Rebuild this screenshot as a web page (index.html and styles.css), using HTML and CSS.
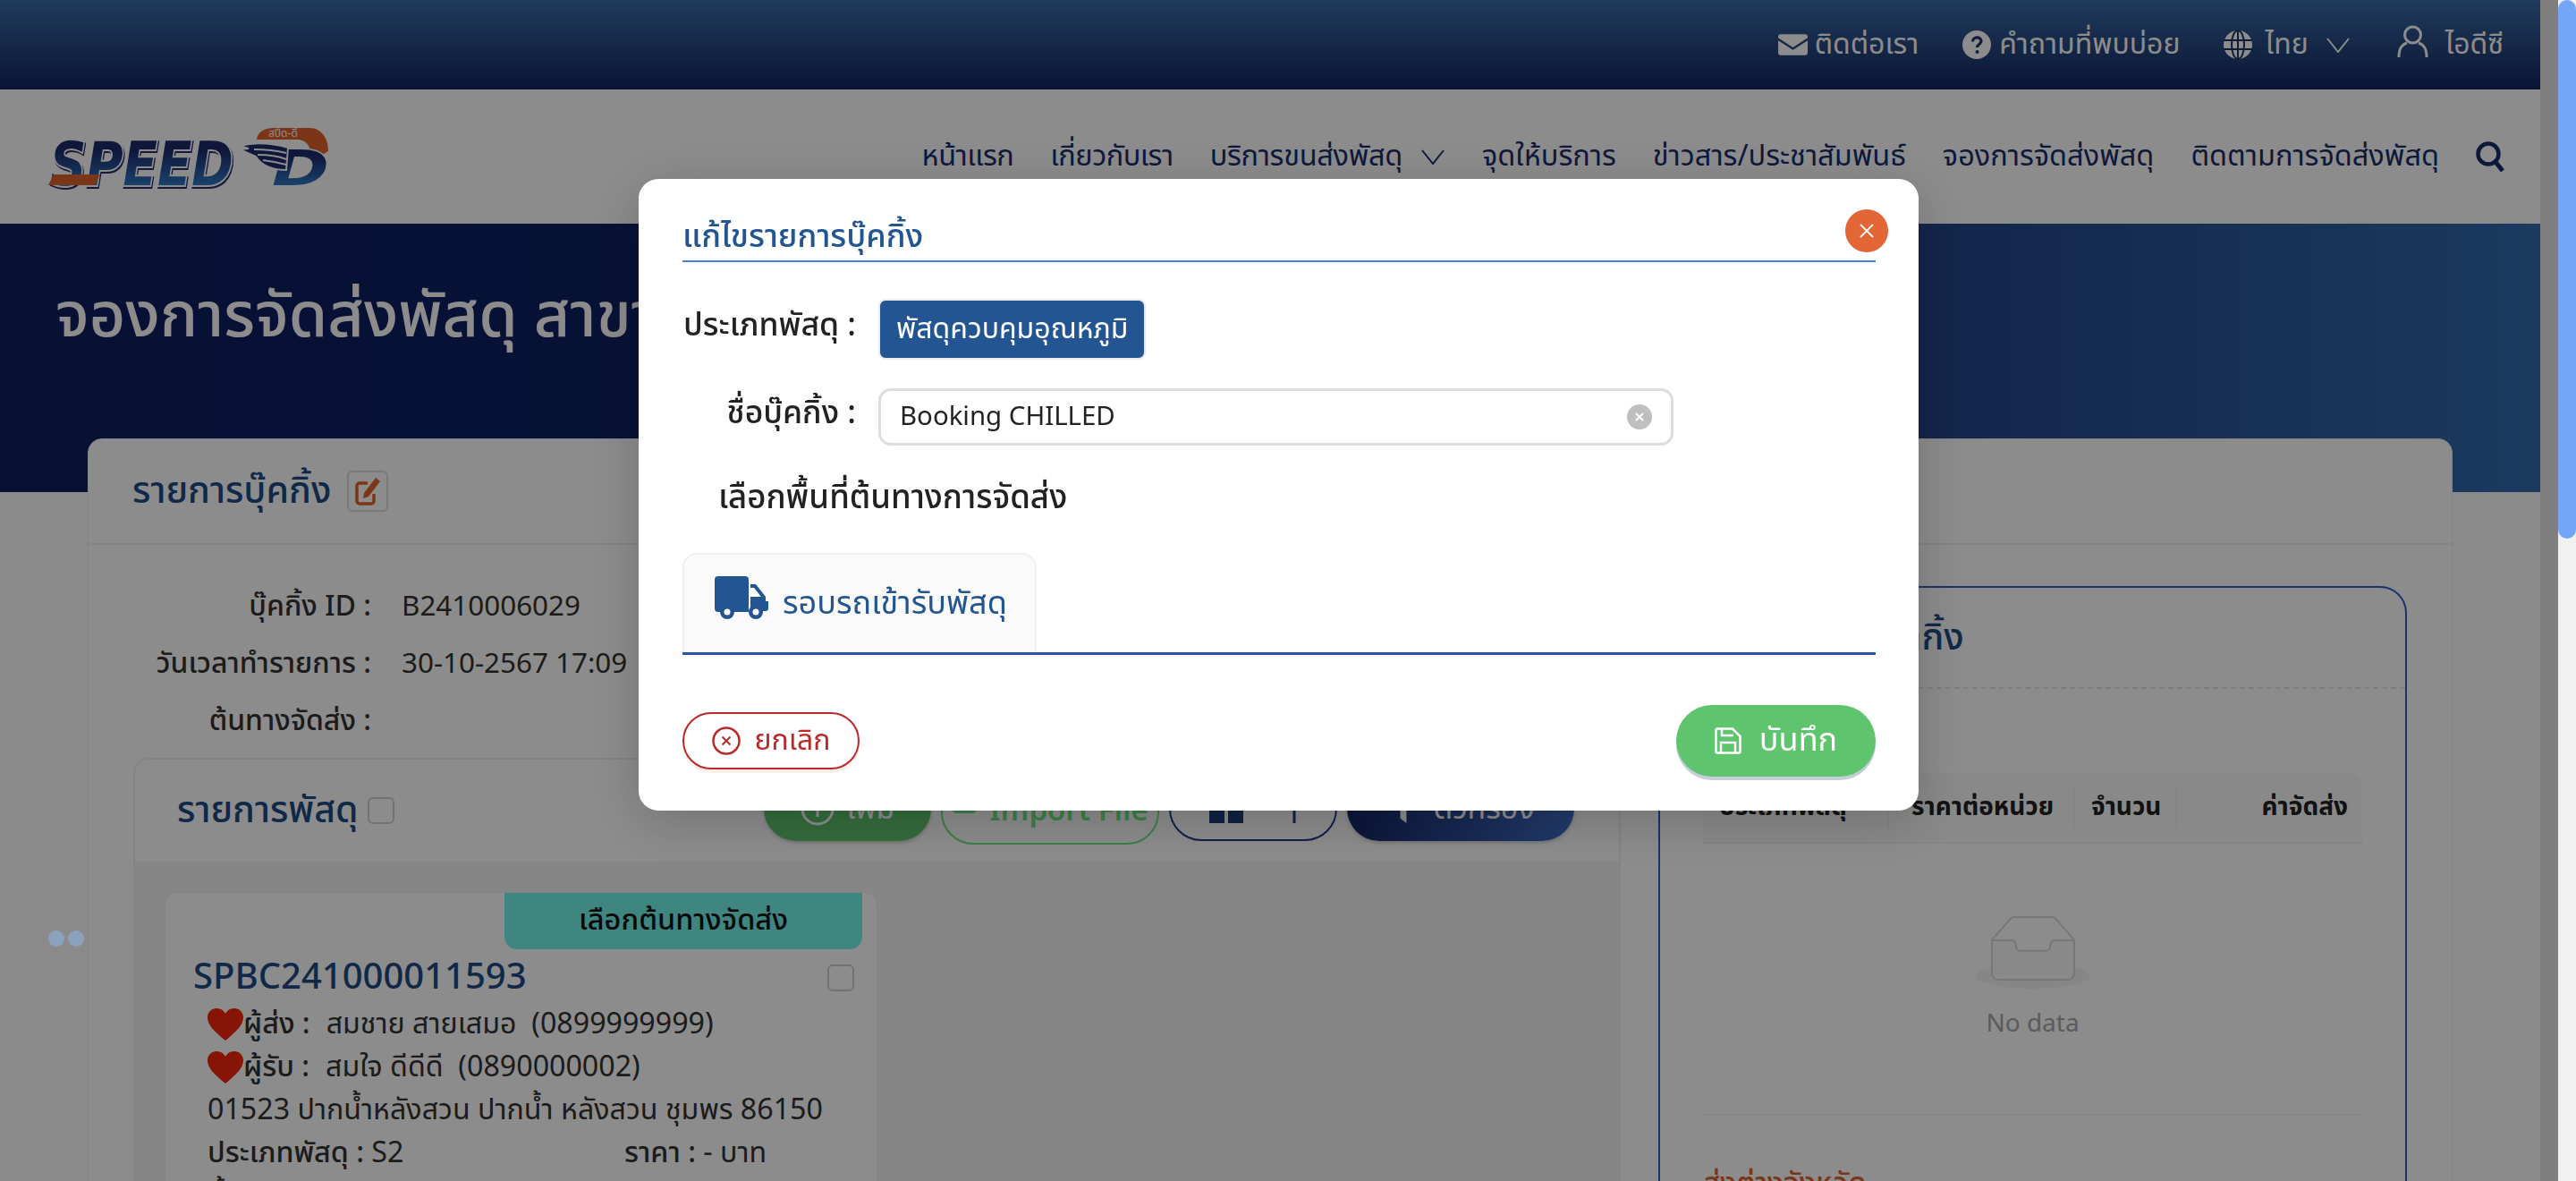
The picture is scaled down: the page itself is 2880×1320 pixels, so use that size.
FILE: index.html
```html
<!DOCTYPE html>
<html lang="th">
<head>
    <meta charset="UTF-8">
    <title>จองการจัดส่งพัสดุ</title>
    <link rel="stylesheet" href="styles.css">
</head>
<body>
    <div class="page">
        <!-- แถบบน -->
        <div class="topbar">
            <a class="top-link">
                <svg class="ic-mail" viewBox="0 0 34 24" fill="currentColor"><path d="M3 0h28a3 3 0 0 1 3 3v1L17 15 0 4V3a3 3 0 0 1 3-3z"/><path d="M0 7l17 11L34 7v14a3 3 0 0 1-3 3H3a3 3 0 0 1-3-3z"/></svg>
                ติดต่อเรา
            </a>
            <a class="top-link">
                <svg class="ic-round" viewBox="0 0 32 32"><circle cx="16" cy="16" r="16" fill="currentColor"/><path d="M11.500 12.500c0-6 9.500-6 9.500-.5 0 3.500-4.500 3.500-4.500 7" fill="none" stroke="#1c3468" stroke-width="3.200"/><circle cx="16.500" cy="24" r="2" fill="#1c3468"/></svg>
                คำถามที่พบบ่อย
            </a>
            <a class="top-link">
                <svg class="ic-round ic-globe" viewBox="0 0 32 32"><circle cx="16" cy="16" r="16" fill="currentColor"/><g fill="none" stroke="#1c3468" stroke-width="2"><ellipse cx="16" cy="16" rx="7" ry="16"/><path d="M0 11h32M0 21h32M16 0v32"/></g></svg>
                ไทย
                <svg class="ic-chev" viewBox="0 0 26 17"><path d="M1 1l12 15L25 1" fill="none" stroke="currentColor" stroke-width="2"/></svg>
            </a>
            <a class="top-link">
                <svg class="ic-user" viewBox="0 0 35 36"><g fill="none" stroke="currentColor" stroke-width="3"><circle cx="17.500" cy="11" r="9"/><path d="M2 36c0-10 3-14 9-16M33 36c0-10-3-14-9-16"/></g></svg>
                ไอดีซี
            </a>
        </div>

        <!-- เมนูหลัก -->
        <div class="navbar">
            <svg class="logo" viewBox="0 0 320 90">
                <defs>
                    <linearGradient id="logoBlue" x1="0" y1="0" x2="0" y2="1">
                        <stop offset="0.3" stop-color="#1c2a6a"/>
                        <stop offset="0.8" stop-color="#2f78c4"/>
                    </linearGradient>
                </defs>
                <text x="6" y="67" class="logo-word" textLength="205" lengthAdjust="spacingAndGlyphs" fill="url(#logoBlue)" stroke="#fff" stroke-width="4" paint-order="stroke">SPEED</text>
                <path d="M4 67l6-12h52l-6 12z" fill="#e0632c"/>
                <!-- ตัว D และปีก -->
                <path d="M237 17C238 7 246 2 256 2h42c13 0 21 11 21 27-1 24-14 41-34 41h-33l10-40h20l-2-13z" fill="#fff"/>
                <path d="M237 16C238 7 246 3 256 3h40c13 0 21 11 21 26l-20 12c3-16-4-25-15-25z" fill="#e0632c"/>
                <text x="250" y="13" class="logo-small">สปีด-ดี</text>
                <text x="254" y="67" class="logo-d" textLength="64" lengthAdjust="spacingAndGlyphs" fill="url(#logoBlue)" stroke="#fff" stroke-width="3" paint-order="stroke">D</text>
                <path d="M218 23c16-4 36-3 54 2l-2 25c-16 0-28-6-34-15l-18-8 10-1z" fill="#1c2a6a" stroke="#fff" stroke-width="2"/>
                <path d="M234 27c12 0 24 1 36 4M238 33c10 0 22 1 32 5M244 39c8 1 18 3 26 5" stroke="#fff" stroke-width="2" fill="none"/>
            </svg>
            <nav class="menu">
                <a class="menu-tight">หน้าแรก</a>
                <a class="menu-tight">เกี่ยวกับเรา</a>
                <a class="menu-drop">บริการขนส่งพัสดุ
                    <svg class="ic-chev" viewBox="0 0 26 17"><path d="M1 1l12 15L25 1" fill="none" stroke="currentColor" stroke-width="2"/></svg>
                </a>
                <a>จุดให้บริการ</a>
                <a>ข่าวสาร/ประชาสัมพันธ์</a>
                <a>จองการจัดส่งพัสดุ</a>
                <a>ติดตามการจัดส่งพัสดุ</a>
                <svg class="ic-search" viewBox="0 0 32 34"><circle cx="14" cy="14" r="11.500" fill="none" stroke="currentColor" stroke-width="4.500"/><path d="M22 23l8 10" stroke="currentColor" stroke-width="5"/></svg>
            </nav>
        </div>

        <div class="hero">
            <h1>จองการจัดส่งพัสดุ สาขาชุมพร</h1>
        </div>

        <div class="content">
            <div class="card">
                <div class="card-head">
                    <h2>รายการบุ๊คกิ้ง</h2>
                    <span class="edit-box">
                        <svg viewBox="0 0 30 34"><path d="M22 20v8a3 3 0 0 1-3 3H6a3 3 0 0 1-3-3V11a3 3 0 0 1 3-3h9" fill="none" stroke="#e0632c" stroke-width="3.500"/><path d="M11 19L24 2l5 4-13 17-6 2z" fill="#e0632c"/></svg>
                    </span>
                </div>
                <div class="card-body">
                    <div class="col-left">
                        <div class="info-row"><span class="info-label">บุ๊คกิ้ง ID :</span><span>B2410006029</span></div>
                        <div class="info-row"><span class="info-label">วันเวลาทำรายการ :</span><span>30-10-2567 17:09</span></div>
                        <div class="info-row"><span class="info-label">ต้นทางจัดส่ง :</span><span></span></div>

                        <div class="parcels">
                            <div class="parcels-head">
                                <h3>รายการพัสดุ</h3>
                                <span class="check"></span>
                                <div class="parcels-actions">
                                    <button class="btn btn-add">
                                        <svg class="btn-ic" viewBox="0 0 38 38"><circle cx="19" cy="19" r="17" fill="none" stroke="currentColor" stroke-width="3"/><path d="M19 10v18M10 19h18" stroke="currentColor" stroke-width="3"/></svg>
                                        เพิ่ม
                                    </button>
                                    <button class="btn btn-import">
                                        <svg class="btn-ic-small" viewBox="0 0 28 26"><rect x="1.500" y="1.500" width="25" height="23" rx="4" fill="none" stroke="currentColor" stroke-width="3"/></svg>
                                        Import File
                                    </button>
                                    <button class="btn btn-sort">
                                        <svg class="sort-grid" viewBox="0 0 38 46" fill="#1b3f78"><rect width="17" height="21"/><rect x="21" width="17" height="21"/><rect y="25" width="17" height="21"/><rect x="21" y="25" width="17" height="21"/></svg>
                                        <svg class="sort-arrow" viewBox="0 0 14 46"><path d="M7 46V6M1 12l6-10 6 10" fill="none" stroke="#1b3f78" stroke-width="3"/></svg>
                                    </button>
                                    <button class="btn btn-filter">
                                        <svg class="btn-ic btn-funnel" viewBox="0 0 30 44" fill="currentColor"><path d="M0 0h30L19 16v28l-8-6V16z"/></svg>
                                        ตัวกรอง
                                    </button>
                                </div>
                            </div>
                            <div class="parcels-list">
                                <div class="parcel">
                                    <div class="parcel-tag">เลือกต้นทางจัดส่ง</div>
                                    <div class="parcel-code">
                                        <span>SPBC241000011593</span>
                                        <span class="check"></span>
                                    </div>
                                    <div class="parcel-line">
                                        <svg class="heart" viewBox="0 0 40 36"><path d="M20 36C8 26 0 19 0 10 0 4 5 0 10 0c4 0 8 2 10 6 2-4 6-6 10-6 5 0 10 4 10 10 0 9-8 16-20 26z"/></svg>
                                        <b>ผู้ส่ง :</b><span class="sp">สมชาย สายเสมอ&nbsp; (0899999999)</span>
                                    </div>
                                    <div class="parcel-line">
                                        <svg class="heart" viewBox="0 0 40 36"><path d="M20 36C8 26 0 19 0 10 0 4 5 0 10 0c4 0 8 2 10 6 2-4 6-6 10-6 5 0 10 4 10 10 0 9-8 16-20 26z"/></svg>
                                        <b>ผู้รับ :</b><span class="sp">สมใจ ดีดีดี&nbsp; (0890000002)</span>
                                    </div>
                                    <div class="parcel-line">01523 ปากน้ำหลังสวน ปากน้ำ หลังสวน ชุมพร 86150</div>
                                    <div class="parcel-line">
                                        <span class="split-left"><b>ประเภทพัสดุ :</b> S2</span>
                                        <span><b>ราคา :</b> - บาท</span>
                                    </div>
                                    <div class="parcel-line"><b>น้ำหนัก :</b> -</div>
                                </div>
                            </div>
                        </div>
                    </div>

                    <div class="summary">
                        <div class="summary-head">สรุปรายการบุ๊คกิ้ง</div>
                        <div class="summary-table">
                            <div class="thead">
                                <span>ประเภทพัสดุ</span>
                                <span>ราคาต่อหน่วย</span>
                                <span>จำนวน</span>
                                <span class="right">ค่าจัดส่ง</span>
                            </div>
                            <div class="empty">
                                <svg viewBox="0 0 64 41"><g transform="translate(0 1)" fill="none" fill-rule="evenodd"><ellipse fill="#f5f5f5" cx="32" cy="33" rx="32" ry="7"/><g fill-rule="nonzero" stroke="#d9d9d9"><path d="M55 12.760L44.854 1.258C44.367.474 43.656 0 42.907 0H21.093c-.749 0-1.460.474-1.947 1.257L9 12.761V22h46v-9.240z"/><path d="M41.613 15.931c0-1.605.994-2.930 2.227-2.931H55v18.137C55 33.260 53.680 35 52.050 35h-40.100C10.320 35 9 33.259 9 31.137V13h11.160c1.233 0 2.227 1.323 2.227 2.928v.022c0 1.605 1.005 2.901 2.237 2.901h14.752c1.232 0 2.237-1.308 2.237-2.913v-.007z" fill="#fafafa"/></g></g></svg>
                                <p>No data</p>
                            </div>
                        </div>
                        <div class="summary-sub">ส่งต่างจังหวัด</div>
                    </div>
                </div>
            </div>
        </div>
        <div class="spin-dots"><i></i><i></i></div>
    </div>
    <div class="gutter"></div>
    <div class="scroll-track"><div class="scroll-thumb"></div></div>

    <!-- modal แก้ไข -->
    <div class="overlay"></div>
    <div class="modal">
        <div class="modal-title">แก้ไขรายการบุ๊คกิ้ง</div>
        <button class="modal-close">
            <svg viewBox="0 0 20 20"><path d="M3 3l14 14M17 3L3 17" stroke="#fff" stroke-width="1.800"/></svg>
        </button>
        <div class="form-row">
            <label>ประเภทพัสดุ :</label>
            <span class="type-tag">พัสดุควบคุมอุณหภูมิ</span>
        </div>
        <div class="form-row form-row-name">
            <label>ชื่อบุ๊คกิ้ง :</label>
            <div class="name-input">
                <span>Booking CHILLED</span>
                <span class="clear"><svg viewBox="0 0 28 28"><path d="M10 10l8 8M18 10l-8 8" stroke="#fff" stroke-width="2"/></svg></span>
            </div>
        </div>
        <div class="pick-title">เลือกพื้นที่ต้นทางการจัดส่ง</div>
        <div class="tabs">
            <div class="tab">
                <svg class="truck" viewBox="0 0 60 48">
                    <path d="M4 0h30a4 4 0 0 1 4 4v36H4a4 4 0 0 1-4-4V4a4 4 0 0 1 4-4z" fill="#235592"/>
                    <path d="M40 9h6l11 14v5h3v8a3 3 0 0 1-3 3H40z" fill="#235592"/>
                    <path d="M40 13h4l8 10H40z" fill="#fff"/>
                    <circle cx="14" cy="40" r="8" fill="#235592"/><circle cx="14" cy="40" r="3.500" fill="#fff"/>
                    <circle cx="46" cy="40" r="8" fill="#235592"/><circle cx="46" cy="40" r="3.500" fill="#fff"/>
                </svg>
                รอบรถเข้ารับพัสดุ
            </div>
        </div>
        <div class="modal-foot">
            <button class="btn-cancel">
                <svg viewBox="0 0 32 32"><circle cx="16" cy="16" r="14.500" fill="none" stroke="#b92a2a" stroke-width="2.500"/><path d="M11.500 11.500l9 9M20.500 11.500l-9 9" stroke="#b92a2a" stroke-width="2"/></svg>
                ยกเลิก
            </button>
            <button class="btn-save">
                <svg viewBox="0 0 30 30"><g fill="none" stroke="#fff" stroke-width="2.500"><path d="M3 1.500h17l8.500 8.500v17a1.500 1.500 0 0 1-1.500 1.500H3A1.500 1.500 0 0 1 1.500 27V3A1.500 1.500 0 0 1 3 1.500z"/><path d="M7 28V17h16v11M8 2v7h13"/></g></svg>
                บันทึก
            </button>
        </div>
    </div>
</body>
</html>
```

FILE: styles.css
```css
* {
    box-sizing: border-box;
}

html, body {
    margin: 0;
    height: 1320px;
    overflow: hidden;
}

body {
    display: flex;
    font-family: "Noto Sans Thai", "Noto Sans", "Open Sans", sans-serif;
    color: #333;
    background-color: #f1f1f1;
}

h1, h2, h3, p {
    margin: 0;
    font-weight: 500;
}

button {
    font-family: inherit;
    cursor: pointer;
}

.page {
    position: relative;
    width: 2840px;
    height: 1320px;
    overflow: hidden;
    flex: none;
    background-color: #fbfbfb;
}

.gutter {
    width: 20px;
    flex: none;
    background-color: #e8e8e8;
}

.scroll-track {
    width: 20px;
    flex: none;
    background-color: #f1f1f1;
    position: relative;
    z-index: 20;
}

.scroll-thumb {
    height: 602px;
    border-radius: 10px;
    background-color: #74a5f7;
}

/* top bar */
.topbar {
    height: 100px;
    display: flex;
    justify-content: flex-end;
    align-items: center;
    gap: 49px;
    padding-right: 41px;
    color: #fff;
    font-size: 32px;
    background: linear-gradient(180deg, #3a6ca6 0%, #14265f 100%);
}

.top-link {
    display: flex;
    align-items: center;
    gap: 8px;
}

.ic-mail {
    width: 33px;
    height: 24px;
}

.ic-round {
    width: 32px;
    height: 32px;
    margin-right: 1px;
}

.ic-globe {
    margin-right: 6px;
}

.ic-chev {
    width: 26px;
    height: 17px;
    margin-left: 12px;
}

.ic-user {
    width: 35px;
    height: 36px;
    margin: 0 11px 8px 4px;
}

/* nav */
.navbar {
    height: 150px;
    display: flex;
    align-items: center;
    justify-content: space-between;
    padding: 0 40px 0 50px;
    background-color: #fff;
}

.logo {
    width: 320px;
    height: 90px;
    margin-top: 20px;
}

.logo-word {
    font-family: "DejaVu Sans", sans-serif;
    font-size: 68px;
    font-weight: 700;
    font-style: italic;
    filter: drop-shadow(1px 2px 0 #2a2a6a);
}

.logo-d {
    font-family: "DejaVu Sans", sans-serif;
    font-size: 56px;
    font-weight: 700;
    font-style: italic;
}

.logo-small {
    font-size: 12px;
    fill: #fff;
}

.menu {
    display: flex;
    align-items: center;
    gap: 41px;
    font-size: 32.5px;
    color: #1a2e6b;
}

.menu-tight {
    letter-spacing: -0.5px;
}

.menu-drop {
    display: flex;
    align-items: center;
    letter-spacing: -0.3px;
}

.menu-drop .ic-chev {
    width: 28px;
    margin-left: 20px;
}

.ic-search {
    width: 32px;
    height: 34px;
}

/* hero */
.hero {
    height: 300px;
    padding: 61px 62px 0;
    color: #fff;
    white-space: nowrap;
    background: linear-gradient(90deg, #0b1f60 0%, #0d2263 30%, #214387 75%, #336bad 100%);
}

.hero h1 {
    font-size: 70px;
    line-height: 88px;
}

/* main card */
.content {
    padding: 0 98px;
    margin-top: -60px;
}

.card {
    background-color: #fff;
    border: 1px solid #eee;
    border-radius: 16px;
}

.card-head {
    height: 118px;
    display: flex;
    align-items: center;
    gap: 18px;
    padding-left: 49px;
    border-bottom: 2px solid #f0f0f0;
}

.card-head h2 {
    font-size: 41px;
    color: #1f4b86;
}

.edit-box {
    width: 46px;
    height: 46px;
    display: flex;
    align-items: center;
    justify-content: center;
    border: 2px solid #ddd;
    border-radius: 6px;
}

.edit-box svg {
    width: 30px;
    height: 34px;
}

.card-body {
    display: flex;
    gap: 42px;
    padding: 36px 50px 0;
}

.col-left {
    width: 1663px;
    flex: none;
}

.info-row {
    height: 64px;
    display: flex;
    align-items: center;
    gap: 34px;
    padding-top: 2px;
    font-size: 31.4px;
}

.info-label {
    width: 266px;
    text-align: right;
    font-size: 32px;
    font-weight: 500;
    white-space: nowrap;
}

/* parcels */
.parcels {
    margin-top: 10px;
    border: 2px solid #f0f0f0;
    border-radius: 16px;
}

.parcels-head {
    height: 114px;
    display: flex;
    align-items: center;
    padding: 0 50px 0 47px;
}

.parcels-head h3 {
    font-size: 41px;
    color: #1f4b86;
    margin-right: 10px;
}

.check {
    width: 30px;
    height: 30px;
    flex: none;
    display: inline-block;
    border: 2px solid #d0d0d0;
    border-radius: 6px;
}

.parcels-actions {
    margin-left: auto;
    display: flex;
    gap: 11px;
}

.btn {
    height: 72px;
    display: flex;
    align-items: center;
    justify-content: center;
    gap: 14px;
    font-size: 34px;
    border-radius: 36px;
    padding: 0;
}

.btn-ic {
    width: 38px;
    height: 38px;
}

.btn-ic-small {
    width: 28px;
    height: 26px;
    margin-bottom: 22px;
}

.btn-add {
    width: 187px;
    color: #fff;
    border: 0;
    background-color: #5ec46d;
    box-shadow: 0 2px 4px rgba(0, 0, 0, 0.2);
}

.btn-import {
    width: 244px;
    height: 74px;
    margin-top: 2px;
    color: #6ee882;
    font-size: 33px;
    font-weight: 600;
    background-color: #fff;
    border: 2px solid #6ee882;
}

.btn-sort {
    width: 188px;
    gap: 50px;
    background-color: #fff;
    border: 2px solid #1f3a8c;
}

.sort-grid {
    width: 38px;
    height: 46px;
    margin-bottom: 14px;
    margin-left: 4px;
}

.sort-arrow {
    width: 14px;
    height: 46px;
    margin-bottom: 14px;
}

.btn-filter {
    width: 254px;
    color: #fff;
    border: 0;
    background: linear-gradient(90deg, #142766 0%, #3e6cc4 100%);
    box-shadow: 0 2px 4px rgba(0, 0, 0, 0.2);
}

.btn-funnel {
    margin-bottom: 6px;
}

.parcels-list {
    background-color: #f5f5f5;
    padding: 34px 33px;
    min-height: 500px;
}

.parcel {
    width: 797px;
    background-color: #fff;
    border: 1px solid #eee;
    border-radius: 14px;
    padding-bottom: 20px;
}

.parcel-tag {
    width: 400px;
    height: 63px;
    margin-left: auto;
    margin-right: 16px;
    display: flex;
    align-items: center;
    justify-content: center;
    font-size: 32.5px;
    font-weight: 500;
    color: #111;
    background-color: #74f4ec;
    border-radius: 0 0 14px 14px;
}

.parcel-code {
    display: flex;
    justify-content: space-between;
    align-items: center;
    height: 60px;
    padding: 4px 25px 0 31px;
    font-size: 40px;
    font-weight: 500;
    color: #1f4b86;
}

.parcel-line {
    height: 48px;
    display: flex;
    align-items: center;
    padding-left: 47px;
    font-size: 32.2px;
    white-space: pre;
}

.parcel-line b {
    font-weight: 500;
}

.split-left {
    width: 466px;
    flex: none;
}

.heart {
    width: 40px;
    height: 36px;
    flex: none;
    fill: #f4260e;
}

.sp {
    margin-left: 18px;
}

/* right panel */
.summary {
    width: 837px;
    flex: none;
    height: 800px;
    margin-top: 10px;
    border: 2px solid #2f5fc4;
    border-radius: 30px;
    padding: 0 48px;
}

.summary-head {
    height: 113px;
    margin: 0 -48px;
    padding: 0 48px;
    display: flex;
    align-items: center;
    font-size: 41px;
    font-weight: 500;
    color: #1f4b86;
    border-bottom: 2px dashed #e4e4e4;
}

.summary-table {
    margin-top: 95px;
    border-bottom: 2px solid #f0f0f0;
}

.thead {
    height: 78px;
    display: grid;
    grid-template-columns: 208px 208px 114px 209px;
    align-items: center;
    font-size: 28px;
    font-weight: 700;
    color: #222;
    background-color: #fafafa;
    border-bottom: 2px solid #f0f0f0;
    border-radius: 12px 12px 0 0;
}

.thead span {
    padding: 0 18px;
    border-right: 2px solid #f0f0f0;
    line-height: 46px;
    white-space: nowrap;
}

.thead span:nth-child(2) {
    padding-left: 25px;
}

.thead .right {
    border-right: 0;
    text-align: right;
}

.empty {
    height: 302px;
    display: flex;
    flex-direction: column;
    align-items: center;
    padding-top: 80px;
}

.empty svg {
    width: 128px;
    height: 82px;
}

.empty p {
    margin-top: 18px;
    font-size: 28px;
    font-weight: 400;
    color: #a6a6a6;
}

.summary-sub {
    margin-top: 52px;
    font-size: 33px;
    font-weight: 500;
    color: #e0632c;
}

.spin-dots {
    position: absolute;
    left: 54px;
    top: 1040px;
    display: flex;
    gap: 4px;
    z-index: 12;
}

.spin-dots i {
    width: 18px;
    height: 18px;
    border-radius: 50%;
    background-color: #8aa2bb;
}

/* modal */
.overlay {
    position: fixed;
    left: 0;
    top: 0;
    width: 2860px;
    height: 1320px;
    background-color: rgba(0, 0, 0, 0.45);
    z-index: 10;
}

.modal {
    position: fixed;
    left: 714px;
    top: 200px;
    width: 1431px;
    height: 706px;
    padding: 34px 48px 0 49px;
    background-color: #fff;
    border-radius: 22px;
    box-shadow: 0 12px 60px rgba(0, 0, 0, 0.2);
    z-index: 15;
}

.modal-title {
    height: 59px;
    font-size: 36px;
    font-weight: 500;
    line-height: 62px;
    color: #235592;
    border-bottom: 2px solid #4a7fe0;
}

.modal-close {
    position: absolute;
    right: 34px;
    top: 34px;
    width: 48px;
    height: 48px;
    display: flex;
    align-items: center;
    justify-content: center;
    padding: 0;
    border: 0;
    border-radius: 50%;
    background-color: #e36636;
}

.modal-close svg {
    width: 20px;
    height: 20px;
}

.form-row {
    display: flex;
    align-items: center;
    margin-top: 41px;
}

.form-row label {
    width: 219px;
    padding: 0 25px 8px 0;
    text-align: right;
    font-size: 35.5px;
    font-weight: 500;
    color: #222;
    white-space: nowrap;
}

.form-row-name {
    margin-top: 32px;
}

.type-tag {
    height: 68px;
    display: flex;
    align-items: center;
    padding: 0 18px;
    font-size: 32px;
    color: #fff;
    background-color: #235592;
    border: 2px solid #e8eaf0;
    border-radius: 8px;
}

.name-input {
    width: 889px;
    height: 64px;
    display: flex;
    align-items: center;
    justify-content: space-between;
    padding: 0 21px;
    font-size: 29.4px;
    color: #222;
    border: 3px solid #ddd;
    border-radius: 14px;
}

.clear {
    width: 28px;
    height: 28px;
    border-radius: 50%;
    background-color: #bfbfbf;
}

.clear svg {
    display: block;
}

.pick-title {
    margin: 32px 0 0 40px;
    height: 54px;
    font-size: 36.6px;
    font-weight: 500;
    line-height: 54px;
    color: #222;
}

.tabs {
    margin-top: 34px;
    border-bottom: 3px solid #2558a0;
}

.tab {
    width: 396px;
    height: 111px;
    display: flex;
    align-items: center;
    gap: 16px;
    padding-left: 34px;
    font-size: 36px;
    color: #235592;
    background-color: #fafafa;
    border: 2px solid #f0f0f0;
    border-bottom: 0;
    border-radius: 16px 16px 0 0;
}

.truck {
    width: 60px;
    height: 48px;
    margin-bottom: 14px;
}

.modal-foot {
    margin-top: 56px;
    display: flex;
    justify-content: space-between;
    align-items: center;
}

.btn-cancel {
    width: 198px;
    height: 64px;
    display: flex;
    align-items: center;
    justify-content: center;
    gap: 16px;
    font-size: 32px;
    color: #b92a2a;
    background-color: #fff;
    border: 2px solid #b92a2a;
    border-radius: 32px;
    box-shadow: 0 4px 0 #fdeeea;
}

.btn-cancel svg {
    width: 32px;
    height: 32px;
}

.btn-save {
    width: 223px;
    height: 80px;
    display: flex;
    align-items: center;
    justify-content: center;
    gap: 20px;
    font-size: 36px;
    color: #fff;
    background-color: #5ec46d;
    border: 0;
    border-radius: 40px;
    box-shadow: 0 4px 0 #c4ced8;
}

.btn-save svg {
    width: 30px;
    height: 30px;
}
```
